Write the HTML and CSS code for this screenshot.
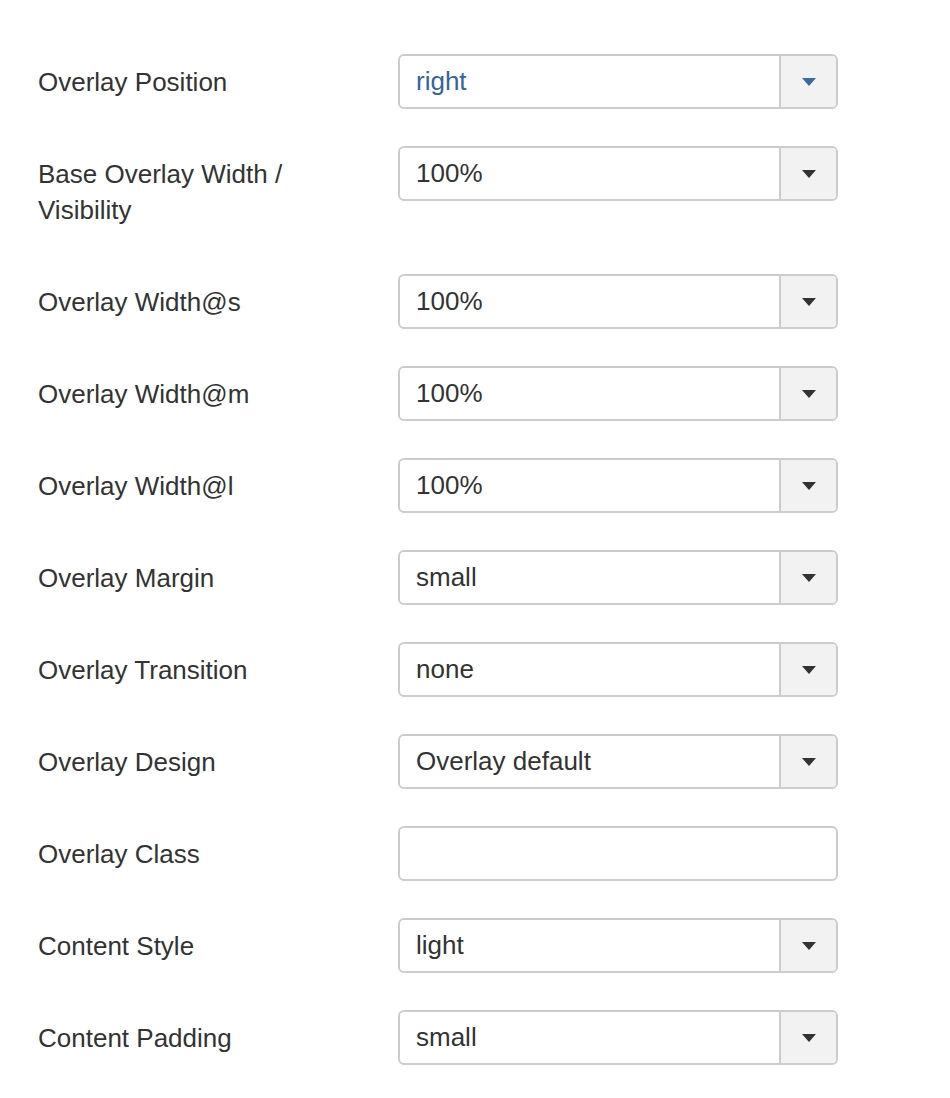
FILE: index.html
```html
<!DOCTYPE html>
<html lang="en">
<head>
    <meta charset="UTF-8">
    <meta name="viewport" content="width=device-width, initial-scale=1.0">
    <title>Overlay Settings</title>
    <link rel="stylesheet" href="styles.css">
</head>
<body>
    <form class="settings">
        <div class="row">
            <label class="label">Overlay Position</label>
            <div class="select active">
                <span class="value">right</span>
                <span class="caret"><i></i></span>
            </div>
        </div>
        <div class="row">
            <label class="label">Base Overlay Width /<br>Visibility</label>
            <div class="select">
                <span class="value">100%</span>
                <span class="caret"><i></i></span>
            </div>
        </div>
        <div class="row">
            <label class="label">Overlay Width@s</label>
            <div class="select">
                <span class="value">100%</span>
                <span class="caret"><i></i></span>
            </div>
        </div>
        <div class="row">
            <label class="label">Overlay Width@m</label>
            <div class="select">
                <span class="value">100%</span>
                <span class="caret"><i></i></span>
            </div>
        </div>
        <div class="row">
            <label class="label">Overlay Width@l</label>
            <div class="select">
                <span class="value">100%</span>
                <span class="caret"><i></i></span>
            </div>
        </div>
        <div class="row">
            <label class="label">Overlay Margin</label>
            <div class="select">
                <span class="value">small</span>
                <span class="caret"><i></i></span>
            </div>
        </div>
        <div class="row">
            <label class="label">Overlay Transition</label>
            <div class="select">
                <span class="value">none</span>
                <span class="caret"><i></i></span>
            </div>
        </div>
        <div class="row">
            <label class="label">Overlay Design</label>
            <div class="select">
                <span class="value">Overlay default</span>
                <span class="caret"><i></i></span>
            </div>
        </div>
        <div class="row">
            <label class="label">Overlay Class</label>
            <input class="text-input" type="text">
        </div>
        <div class="row">
            <label class="label">Content Style</label>
            <div class="select">
                <span class="value">light</span>
                <span class="caret"><i></i></span>
            </div>
        </div>
        <div class="row">
            <label class="label">Content Padding</label>
            <div class="select">
                <span class="value">small</span>
                <span class="caret"><i></i></span>
            </div>
        </div>
    </form>
</body>
</html>
```

FILE: styles.css
```css
body {
    margin: 0;
    background: #fff;
    font-family: "Liberation Sans", Arial, sans-serif;
    color: #333;
}
.settings {
    padding: 54px 0 0 38px;
}
.row {
    display: flex;
    align-items: flex-start;
    margin-bottom: 37px;
}
.label {
    width: 360px;
    padding: 9.5px 0;
    font-size: 26px;
    line-height: 36px;
    color: #333;
}
.select {
    display: flex;
    width: 440px;
    height: 55px;
    box-sizing: border-box;
    border: 2px solid #ccc;
    border-radius: 6px;
    overflow: hidden;
}
.value {
    flex: 1;
    padding-left: 16px;
    font-size: 26px;
    line-height: 51px;
    color: #333;
}
.caret {
    width: 55px;
    background: #f2f2f2;
    border-left: 2px solid #ccc;
    display: flex;
    align-items: center;
    justify-content: center;
}
.caret i {
    width: 0;
    height: 0;
    border-left: 7.5px solid transparent;
    border-right: 7.5px solid transparent;
    border-top: 8px solid #333;
}
.active .value {
    color: #33659c;
}
.active .caret i {
    border-top-color: #3a6aa0;
}
.text-input {
    display: block;
    width: 440px;
    height: 55px;
    box-sizing: border-box;
    border: 2px solid #ccc;
    border-radius: 6px;
    margin: 0;
    background: #fff;
}
```
